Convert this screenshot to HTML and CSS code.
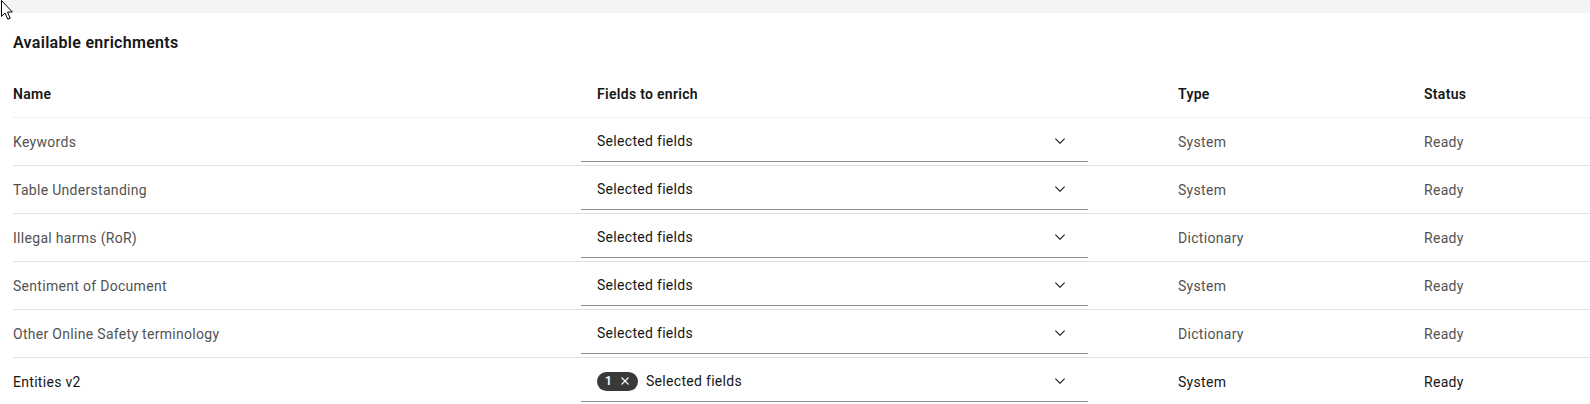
FILE: index.html
```html
<!DOCTYPE html>
<html lang="en">
<head>
<meta charset="utf-8">
<title>Available enrichments</title>
<link rel="stylesheet" href="styles.css">
</head>
<body>
<div class="topbar"></div>
<svg class="cursor" width="14" height="20" viewBox="0 0 14 20"><path d="M1.5 0.5 L1.5 16.5 L5 13 L7.8 19.2 L10.2 18.2 L7.5 12 L12.3 12 Z" fill="#fff" stroke="#000" stroke-width="1" stroke-linejoin="miter"/></svg>
<section class="panel">
  <h2 class="title">Available enrichments</h2>
  <div class="table">
    <div class="row head">
      <div class="cell">Name</div>
      <div class="cell fields-head">Fields to enrich</div>
      <div class="cell">Type</div>
      <div class="cell">Status</div>
    </div>
    <div class="row">
      <div class="cell">Keywords</div>
      <div class="cell"><div class="dropdown"><span class="dd-label">Selected fields</span><svg class="chev" width="16" height="16" viewBox="0 0 16 16"><path d="M8 11L3 6l.7-.7L8 9.6l4.3-4.3.7.7z" fill="#161616"/></svg></div></div>
      <div class="cell">System</div>
      <div class="cell">Ready</div>
    </div>
    <div class="row">
      <div class="cell">Table Understanding</div>
      <div class="cell"><div class="dropdown"><span class="dd-label">Selected fields</span><svg class="chev" width="16" height="16" viewBox="0 0 16 16"><path d="M8 11L3 6l.7-.7L8 9.6l4.3-4.3.7.7z" fill="#161616"/></svg></div></div>
      <div class="cell">System</div>
      <div class="cell">Ready</div>
    </div>
    <div class="row">
      <div class="cell">Illegal harms (RoR)</div>
      <div class="cell"><div class="dropdown"><span class="dd-label">Selected fields</span><svg class="chev" width="16" height="16" viewBox="0 0 16 16"><path d="M8 11L3 6l.7-.7L8 9.6l4.3-4.3.7.7z" fill="#161616"/></svg></div></div>
      <div class="cell">Dictionary</div>
      <div class="cell">Ready</div>
    </div>
    <div class="row">
      <div class="cell">Sentiment of Document</div>
      <div class="cell"><div class="dropdown"><span class="dd-label">Selected fields</span><svg class="chev" width="16" height="16" viewBox="0 0 16 16"><path d="M8 11L3 6l.7-.7L8 9.6l4.3-4.3.7.7z" fill="#161616"/></svg></div></div>
      <div class="cell">System</div>
      <div class="cell">Ready</div>
    </div>
    <div class="row">
      <div class="cell">Other Online Safety terminology</div>
      <div class="cell"><div class="dropdown"><span class="dd-label">Selected fields</span><svg class="chev" width="16" height="16" viewBox="0 0 16 16"><path d="M8 11L3 6l.7-.7L8 9.6l4.3-4.3.7.7z" fill="#161616"/></svg></div></div>
      <div class="cell">Dictionary</div>
      <div class="cell">Ready</div>
    </div>
    <div class="row active">
      <div class="cell">Entities v2</div>
      <div class="cell"><div class="dropdown"><span class="tag"><span class="tag-count">1</span><svg class="tag-x" width="16" height="16" viewBox="0 0 16 16"><path d="M4.5 4.5l7 7M11.5 4.5l-7 7" stroke="#fff" stroke-width="1.1"/></svg></span><span class="dd-label">Selected fields</span><svg class="chev" width="16" height="16" viewBox="0 0 16 16"><path d="M8 11L3 6l.7-.7L8 9.6l4.3-4.3.7.7z" fill="#161616"/></svg></div></div>
      <div class="cell">System</div>
      <div class="cell">Ready</div>
    </div>
  </div>
</section>
</body>
</html>
```

FILE: styles.css
```css
* { box-sizing: border-box; }
html, body { margin: 0; padding: 0; background: #fff; }
body {
  font-family: Roboto, "Liberation Sans", Arial, sans-serif;
  font-size: 14px;
  letter-spacing: 0.3px;
  color: #161616;
  overflow: hidden;
}
.topbar { height: 13px; background: #f4f4f4; }
.cursor { position: absolute; left: 0; top: 0; }
.panel { padding-left: 13px; }
.title {
  margin: 0;
  padding-top: 18px;
  height: 57px;
  font-size: 16px;
  line-height: 24px;
  font-weight: 600;
  color: #161616;
}
.row {
  display: grid;
  grid-template-columns: 568px 597px 246px 1fr;
  align-items: center;
  height: 48px;
  border-bottom: 1px solid #e0e0e0;
  color: #525252;
}
.row.head {
  border-bottom-color: #f0f0f0;
  font-weight: 600;
  color: #161616;
}
.row.active { color: #161616; }
.cell { line-height: 18px; white-space: nowrap; }
.fields-head { padding-left: 16px; }
.dropdown {
  display: flex;
  align-items: center;
  width: 507px;
  height: 40px;
  padding: 0 20px 0 16px;
  border-bottom: 1px solid #8d8d8d;
  color: #161616;
}
.dd-label { flex: 1; }
.chev { flex: none; }
.tag {
  display: inline-flex;
  align-items: center;
  height: 19px;
  width: 41px;
  padding: 0 5px 0 8px;
  margin-right: 8px;
  border-radius: 10px;
  background: #393939;
  color: #fff;
  font-size: 12px;
  font-weight: 600;
  line-height: 19px;
  letter-spacing: 0;
}
.tag-count { width: 7px; margin-right: 5px; }
.tag-x { flex: none; }
```
